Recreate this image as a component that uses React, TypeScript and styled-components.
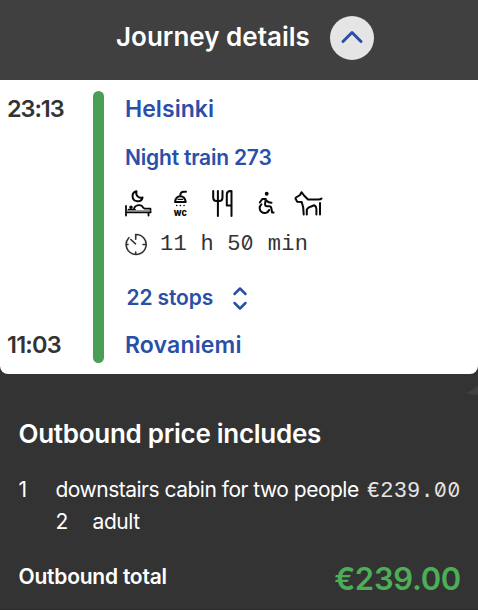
import React from 'react';
import styled, { createGlobalStyle } from 'styled-components';

const GlobalStyle = createGlobalStyle`
  * { box-sizing: border-box; }
  body { margin: 0; background: #333; overflow: hidden; font-family: Inter, sans-serif; -webkit-font-smoothing: antialiased; }
  button { border: 0; padding: 0; font: inherit; background: none; cursor: pointer; }
  h1, h2, p { margin: 0; }
`;

const Page = styled.main`
  width: 478px;
  height: 610px;
  background: #333;
  border-bottom: 1px solid #2b2b2b;
  overflow: hidden;
`;

const Header = styled.header`
  height: 80px;
  padding: 16px 0 0 116px;
  display: flex;
  align-items: flex-start;
  background: #404040;
  color: #fff;
`;

const Title = styled.h1`
  width: 214px;
  font-size: 26px;
  font-weight: 600;
  line-height: 42px;
  letter-spacing: 0;
  white-space: nowrap;
`;

const Toggle = styled.button`
  width: 44px;
  height: 44px;
  border-radius: 50%;
  background: #e5e5e5;
`;

const Card = styled.section`
  height: 294px;
  padding: 11px 0 0 8px;
  display: grid;
  grid-template-columns: 85px 11px 1fr;
  grid-template-rows: 272px;
  background: #fff;
  border-radius: 0 0 8px 8px;
`;

const Times = styled.div`
  display: flex;
  flex-direction: column;
  justify-content: space-between;
`;

const Time = styled.span<{ $spacing: number }>`
  margin-left: -1px;
  font-size: 23.5px;
  font-weight: 600;
  line-height: 36px;
  letter-spacing: ${p => p.$spacing}px;
  color: #333;
`;

const RouteBar = styled.div`
  border-radius: 6px;
  background: #4a9f57;
`;

const Details = styled.div`
  padding-left: 21px;
  color: #2a4fa9;
`;

const Station = styled.p<{ $spacing: number }>`
  font-size: 23px;
  font-weight: 600;
  line-height: 36px;
  letter-spacing: ${p => p.$spacing}px;
`;

const TrainName = styled.p`
  margin-top: 16px;
  font-size: 21px;
  font-weight: 600;
  line-height: 30px;
  letter-spacing: -0.2px;
`;

const Services = styled.div`
  height: 30px;
  margin: 16px 0 0 -1px;
  display: grid;
  grid-template-columns: 48px 39px 46px 37px 30px;
`;

const ServiceIcon = styled.svg`
  height: 30px;
  display: block;
  fill: none;
  stroke: #080808;
  stroke-width: 2;
  stroke-linecap: round;
  stroke-linejoin: round;
`;

const WcText = styled.text`
  font: 800 10px Inter, sans-serif;
  fill: #080808;
  stroke: none;
`;

const Duration = styled.div`
  height: 30px;
  margin-top: 10px;
  display: flex;
  align-items: flex-start;
  gap: 12px;
  color: #333;
`;

const LineIcon = styled.svg<{ $weight: number }>`
  display: block;
  fill: none;
  stroke: currentColor;
  stroke-width: ${p => p.$weight};
  stroke-linecap: round;
  stroke-linejoin: round;
`;

const ClockIcon = styled(LineIcon)`
  margin-top: 4px;
`;

const Mono = styled.span`
  display: inline-block;
  font-family: "Liberation Mono", monospace;
  font-size: 22px;
  line-height: 32px;
  letter-spacing: 0.27px;
  white-space: pre;
`;

const SlashedZero = styled.span`
  display: inline-block;
  width: 13.47px;
  font-family: Inter, sans-serif;
  font-size: 20px;
  line-height: 20px;
  letter-spacing: 0;
  font-feature-settings: "zero" 1;
`;

const Stops = styled.button`
  margin-top: 24px;
  padding-left: 1.5px;
  display: flex;
  align-items: center;
  color: #2a4fa9;
`;

const StopsLabel = styled.span`
  width: 105.5px;
  text-align: left;
  font-size: 21px;
  font-weight: 600;
  line-height: 29px;
  letter-spacing: -0.12px;
`;

const Arrival = styled.div`
  margin-top: 15px;
`;

const Pointer = styled.svg`
  display: block;
  width: 12px;
  height: 10px;
  margin: 11px 0 0 auto;
  fill: #404040;
`;

const Summary = styled.section`
  padding: 18px 17px 0 18.5px;
  color: #fff;
`;

const SummaryTitle = styled.h2`
  font-size: 26px;
  font-weight: 600;
  line-height: 42px;
  letter-spacing: -0.28px;
`;

const PriceLine = styled.div`
  height: 32px;
  margin-top: 19px;
  display: grid;
  grid-template-columns: 37px 1fr auto;
`;

const PassengerLine = styled.div`
  display: grid;
  grid-template-columns: 37px 1fr;
  padding-left: 37px;
`;

const Body = styled.span<{ $spacing?: number }>`
  font-size: 21px;
  line-height: 32px;
  letter-spacing: ${p => p.$spacing ?? 0}px;
  white-space: nowrap;
`;

const Price = styled.div`
  padding-top: 2px;
  color: #e5e5e5;
`;

const TotalLine = styled.div`
  margin-top: 20px;
  display: flex;
  justify-content: space-between;
`;

const TotalLabel = styled.span`
  font-size: 21px;
  font-weight: 600;
  line-height: 37px;
  letter-spacing: -0.23px;
`;

const TotalPrice = styled.span`
  font-size: 31px;
  font-weight: 600;
  line-height: 42px;
  letter-spacing: -0.3px;
  color: #4caf57;
`;

const Zero = () => <SlashedZero>0</SlashedZero>;

export default function App() {
  return (
    <>
      <GlobalStyle />
      <Page>
        <Header>
          <Title>Journey details</Title>
          <Toggle aria-label="Hide journey details">
            <LineIcon $weight={3} color="#2a4fa9" width="44" height="44" viewBox="0 0 44 44">
              <path d="M13 25.500 22 16.500l9 9" />
            </LineIcon>
          </Toggle>
        </Header>
        <Card>
          <Times>
            <Time $spacing={-1.08}>23:13</Time>
            <Time $spacing={-0.8}>11:03</Time>
          </Times>
          <RouteBar />
          <Details>
            <Station $spacing={0.06}>Helsinki</Station>
            <TrainName>Night train 273</TrainName>
            <Services>
              <ServiceIcon width="28" viewBox="0 0 28 30">
                <path d="M12.5 2.200a5.100 5.100 0 1 0 6.100 6.200c-4 1.500-7.300-2.200-6.100-6.200z" />
                <path d="M2 17v9.500M24.500 23.500v3M2 23.300h24.500" strokeWidth="1.800" />
                <path d="M10 19.500c1.500-4 7.500-4.500 9-1l1.500 1.200h6v3.500M4.500 20.500h6.500" strokeWidth="1.700" />
                <path d="M3 21.800h23" stroke="#777" strokeWidth="1.200" />
                <circle cx="7" cy="18.200" r="1" fill="#080808" strokeWidth="1.500" />
              </ServiceIcon>
              <ServiceIcon width="17" viewBox="0 0 17 30">
                <path d="M14 2.700h-2.200q-3.500 0-3.500 3.800M3 13h10.700c-.5-3.700-2.500-5.700-5.400-5.700S3.500 9.300 3 13z" />
                <path d="M6 10.300h4.700" strokeWidth="1.300" />
                <path d="M4.700 16.600h.1M8.300 16.600h.1M12 16.600h.1" strokeWidth="1.500" />
                <WcText x="1.800" y="27" textLength="13" lengthAdjust="spacingAndGlyphs">wc</WcText>
              </ServiceIcon>
              <ServiceIcon width="24" viewBox="0 0 24 30">
                <path d="M2.200 2v6.500q0 3.500 3.300 3.500h2.700q3.300 0 3.300-3.500V2M6.900 2v25" />
                <path d="M20.500 27V2h-1q-3.700 0-3.700 4v10.500h4.700" />
              </ServiceIcon>
              <ServiceIcon width="18" viewBox="0 0 18 30">
                <circle cx="9.700" cy="4.700" r="1.200" fill="#080808" strokeWidth="1.500" />
                <path d="M2.800 13.500l2.500-3.500h3.500l-.7 4.500q-.3 2.800 2 2.800h2.200q1.700 0 2 2l.8 4.200h1.500M9.300 11.500q2 2.300 5.200 2.300M4.500 15.300a4.900 4.900 0 1 0 7.600 5.700" />
              </ServiceIcon>
              <ServiceIcon width="29" viewBox="0 0 29 30">
                <path d="M7.500 3.200 6 6 2 8.500q-1 1 0 2l1.200 2.200 4.500.3 1.500 5.500.5 7M7.500 3.200l2.500 3.300 4 4h10.500q2 0 3-1M12.800 25.500v-5q1.500-2.500 3.700-2.700l3.700-1.500q2 .8 2.200 3.500v5.700M26 14v11.500" />
              </ServiceIcon>
            </Services>
            <Duration>
              <ClockIcon $weight={1.6} width="23" height="23" viewBox="0 0 23 23">
                <path d="M10.700 1.500a10 10 0 1 1-6.900 3.200M10.700 1.500v4.700M5.800 6.500l4.700 4.300M1 11.500h2M20 11.500h-2M10.700 21v-2" />
              </ClockIcon>
              <Mono>11 h 5<Zero /> min</Mono>
            </Duration>
            <Stops>
              <StopsLabel>22 stops</StopsLabel>
              <LineIcon $weight={2.5} width="16" height="26" viewBox="0 0 16 26">
                <path d="M2.500 9 8 3.500 13.500 9M2.500 18 8 23.500 13.500 18" />
              </LineIcon>
            </Stops>
            <Arrival>
              <Station $spacing={0.15}>Rovaniemi</Station>
            </Arrival>
          </Details>
        </Card>
        <Pointer viewBox="0 0 12 10"><path d="M0 8.500 12 1v9L4 9z" /></Pointer>
        <Summary>
          <SummaryTitle>Outbound price includes</SummaryTitle>
          <PriceLine>
            <Body>1</Body>
            <Body $spacing={-0.5}>downstairs cabin for two people</Body>
            <Price><Mono>€239.<Zero /><Zero /></Mono></Price>
          </PriceLine>
          <PassengerLine>
            <Body>2</Body>
            <Body $spacing={-0.4}>adult</Body>
          </PassengerLine>
          <TotalLine>
            <TotalLabel>Outbound total</TotalLabel>
            <TotalPrice>€239.00</TotalPrice>
          </TotalLine>
        </Summary>
      </Page>
    </>
  );
}
